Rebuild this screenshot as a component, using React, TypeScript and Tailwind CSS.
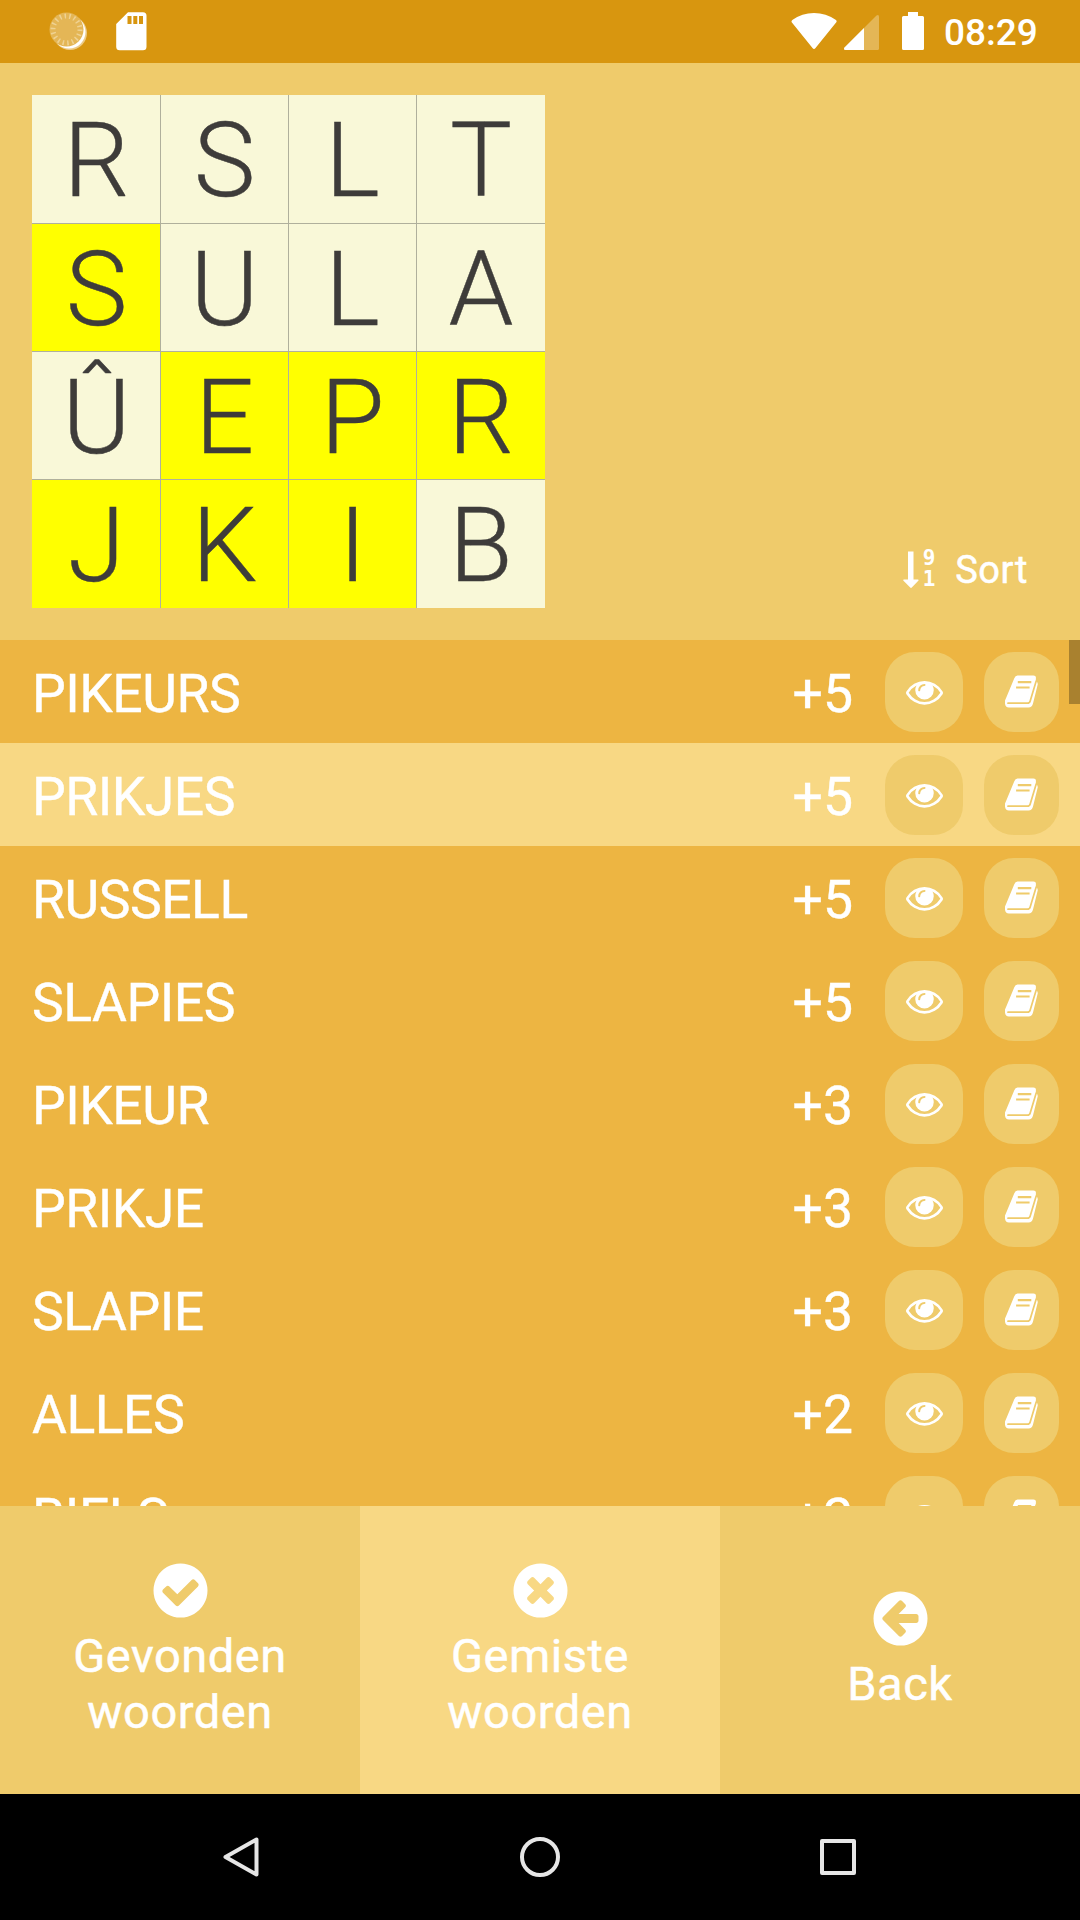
import React from 'react';

const CIRCLE =
  'q0 209-103 385.500t-279.500 279.500-385.500 103-385.500-103-279.500-279.500-103-385.500 103-385.500 279.500-279.500 385.500-103 385.500 103 279.500 279.500 103 385.500z';

const CHECK =
  'M1412 734q0-28-18-46l-91-90q-19-19-45-19t-45 19l-408 407-226-226q-19-19-45-19t-45 19l-91 90q-18 18-18 46 0 27 18 45l362 362q19 19 45 19 27 0 46-19l543-543q18-18 18-45zm252 162' + CIRCLE;
const TIMES =
  'M1277 1122q0-26-19-45l-181-181 181-181q19-19 19-45 0-27-19-46l-90-90q-19-19-46-19-26 0-45 19l-181 181-181-181q-19-19-45-19-27 0-46 19l-90 90q-19 19-19 46 0 26 19 45l181 181-181 181q-19 19-19 45 0 27 19 46l90 90q19 19 46 19 26 0 45-19l181-181 181 181q19 19 45 19 27 0 46-19l90-90q19-19 19-46zm387-226' + CIRCLE;
const ARROW_LEFT =
  'M1408 960v-128q0-26-19-45t-45-19h-502l189-189q19-19 19-45t-19-45l-91-91q-18-18-45-18t-45 18l-362 362-91 91q-18 18-18 45t18 45l91 91 362 362q18 18 45 18t45-18l91-91q18-18 18-45t-18-45l-189-189h502q26 0 45-19t19-45zm256-64' + CIRCLE;
const EYE =
  'M1664 960q-152-236-381-353 61 104 61 225 0 185-131.500 316.500t-316.500 131.500-316.500-131.500-131.500-316.500q0-121 61-225-229 117-381 353 133 205 333.500 326.500t434.500 121.500 434.500-121.500 333.500-326.500zm-720-384q0-20-14-34t-34-14q-125 0-214.500 89.500t-89.500 214.500q0 20 14 34t34 14 34-14 14-34q0-86 61-147t147-61q20 0 34-14t14-34zm848 384q0 34-20 69-140 230-376.500 368.500t-499.500 138.500-499.500-139-376.500-368q-20-35-20-69t20-69q140-229 376.500-368t499.500-139 499.500 139 376.500 368q20 35 20 69z';

function Icon({ d, className }: { d: string; className: string }) {
  return (
    <svg viewBox="0 0 1792 1792" fill="currentColor" className={className}>
      <path d={d} />
    </svg>
  );
}

function BookIcon() {
  return (
    <svg viewBox="0 0 33 33" width="33" height="33" fill="none">
      <path
        d="M12.500 .5H28.500Q31.300 .5 30.900 3.200L30.800 6Q33 7 32.700 9.500L28 28.500Q27 32.500 23.500 32.500H4Q.3 32.500 0 28.500V25.500L1.500 22L9.300 3.200Q10.300 .5 12.500 .5Z"
        fill="#fff"
      />
      <path d="M3 28.200H22.500Q24.600 28.200 25.200 26L31.200 6" stroke="#efcb6b" strokeWidth="1.700" strokeLinecap="round" />
      <path d="M12.800 7.200H26.300M11.100 12.500H24.600" stroke="#efcb6b" strokeWidth="2.200" />
    </svg>
  );
}

function StatusBar() {
  return (
    <div className="flex h-[63px] shrink-0 items-start justify-between bg-[#d8960f]">
      <svg width="160" height="63" viewBox="0 0 160 63">
        <circle cx="70" cy="33" r="17" fill="#fff" opacity="0.5" />
        <circle cx="69" cy="32" r="16.500" fill="#fff" />
        <circle cx="66.500" cy="29.500" r="17" fill="#e4b656" />
        <circle cx="66.500" cy="29.500" r="13.500" fill="none" stroke="#efd292" strokeWidth="5" strokeDasharray="1.500 3.212" />
        <path d="M128 12.300h15a3.500 3.500 0 0 1 3.500 3.500v31a3.500 3.500 0 0 1-3.500 3.500h-23.300a3.500 3.500 0 0 1-3.500-3.500V24z" fill="#fff" />
        <path d="M127.500 16h4v8h-4zM133.300 16h4v8h-4zM139 16h4v8h-4z" fill="#d8960f" />
      </svg>
      <div className="flex">
        <svg width="145" height="63" viewBox="785 0 145 63">
          <path d="M791.500 22Q791.300 21 792.300 20Q802 13 814 13T836 20Q837 21 836.500 22L815.500 48Q814 50 812.500 48Z" fill="#fff" />
          <path d="M876.500 15.500Q879 14 879 17V48.500Q879 50 877.500 50H845.500Q843 49.500 844.500 47.500Z" fill="#e4b656" />
          <path d="M864 28V50H845.500Q843 49.500 844.500 47.500Z" fill="#fff" />
          <path d="M908 12h10v4h4.500q1.500 0 1.500 1.500v31q0 1.500-1.500 1.500h-19q-1.500 0-1.500-1.500v-31q0-1.500 1.500-1.500h4.500z" fill="#fff" />
        </svg>
        <div className="w-[150px] pt-[11px] pl-[14px] text-[37px] leading-[44px] font-medium">08:29</div>
      </div>
    </div>
  );
}

const BOARD = ['R', 'S', 'L', 'T', 'S', 'U', 'L', 'A', 'Û', 'E', 'P', 'R', 'J', 'K', 'I', 'B'];
const MARKED = [4, 9, 10, 11, 12, 13, 14];

function Board() {
  return (
    <div className="grid h-[513px] w-[513px] grid-cols-[128px_128px_128px_129px] grid-rows-[128px_128px_128px_129px]">
      {BOARD.map((letter, i) => (
        <div
          key={i}
          className={`flex items-center justify-center border-[#b0b09c] pt-[4px] text-[104px] leading-none font-light text-[#3e3c3a] [-webkit-text-stroke:0.4px_#3e3c3a] ${
            MARKED.includes(i) ? 'bg-[#ffff00]' : 'bg-[#f9f8d8]'
          } ${i % 4 > 0 ? 'border-l' : 'pl-px'} ${i > 3 ? 'border-t' : ''}`}
        >
          {letter}
        </div>
      ))}
    </div>
  );
}

function SortButton() {
  return (
    <div className="mr-[52px] mb-[16px] flex items-center">
      <svg width="16" height="38" viewBox="0 0 16 38" fill="#fff">
        <path d="M5 0.500h5.500v28h4.500q1 .5.300 1.300l-6.500 6.700q-.8.800-1.600 0l-6.700-6.700q-.7-.9.300-1.300H5z" />
      </svg>
      <span className="mb-[2px] ml-[2px] flex w-4 flex-col items-center font-['DejaVu_Sans_Mono'] text-[21px] leading-[21px] font-bold">
        <span>9</span>
        <span>1</span>
      </span>
      <span className="ml-[18px] text-[38px] leading-[44px] tracking-[0.6px] [-webkit-text-stroke:0.5px_white]">Sort</span>
    </div>
  );
}

const WORDS: [string, string][] = [
  ['PIKEURS', '+5'],
  ['PRIKJES', '+5'],
  ['RUSSELL', '+5'],
  ['SLAPIES', '+5'],
  ['PIKEUR', '+3'],
  ['PRIKJE', '+3'],
  ['SLAPIE', '+3'],
  ['ALLES', '+2'],
  ['BIELS', '+2'],
];

function WordRow({ word, points, active }: { word: string; points: string; active: boolean }) {
  return (
    <div className={`flex h-[103px] shrink-0 items-center pr-[21px] pl-8 ${active ? 'bg-[#f8d884]' : ''}`}>
      <span className="flex-1 pt-1 text-[53.5px] leading-[64px] tracking-[-0.5px] [-webkit-text-stroke:0.4px_white]">{word}</span>
      <span className="mr-[32px] pt-1 text-[53.5px] leading-[64px] [-webkit-text-stroke:0.4px_white]">{points}</span>
      <span className="mr-[21px] flex h-20 w-[78px] items-center justify-center rounded-[30px] bg-[#efcb6b]">
        <Icon d={EYE} className="size-[37px]" />
      </span>
      <span className="flex h-20 w-[75px] items-center justify-center rounded-[30px] bg-[#efcb6b]">
        <BookIcon />
      </span>
    </div>
  );
}

function Tab({ icon, lines, active = false }: { icon: string; lines: string[]; active?: boolean }) {
  return (
    <div
      className={`flex flex-col items-center justify-center pb-[2px] text-[47px] leading-[56px] tracking-[0.55px] [-webkit-text-stroke:0.5px_white] ${
        active ? 'bg-[#f8d884]' : 'bg-[#efcb6b]'
      }`}
    >
      <Icon d={icon} className="mb-[6px] size-[63px]" />
      {lines.map((line) => (
        <span key={line}>{line}</span>
      ))}
    </div>
  );
}

function NavBar() {
  return (
    <div className="flex h-[126px] shrink-0 items-center justify-between bg-black px-[220px]">
      <svg width="44" height="44" viewBox="0 0 44 44" fill="none" stroke="#e6e6e6" strokeWidth="4" strokeLinejoin="round">
        <path d="M36.500 4.500V39.500L5.500 22z" />
      </svg>
      <svg width="44" height="44" viewBox="0 0 44 44" fill="none" stroke="#e6e6e6" strokeWidth="4">
        <circle cx="22" cy="22" r="18" />
      </svg>
      <svg width="44" height="44" viewBox="0 0 44 44" fill="none" stroke="#e6e6e6" strokeWidth="4" strokeLinejoin="round">
        <path d="M6 6h32v32H6z" />
      </svg>
    </div>
  );
}

export default function App() {
  return (
    <div className="flex h-[1920px] w-[1080px] flex-col overflow-hidden bg-[#efcb6b] font-['Roboto',sans-serif] text-white">
      <StatusBar />
      <div className="flex h-[577px] shrink-0 items-end justify-between pb-8 pl-8">
        <Board />
        <SortButton />
      </div>
      <div className="relative flex h-[866px] shrink-0 flex-col overflow-hidden bg-[#edb542]">
        {WORDS.map(([word, points], i) => (
          <WordRow key={word} word={word} points={points} active={i === 1} />
        ))}
        <div className="absolute top-0 right-0 h-16 w-[11px] bg-[#a9812f]" />
      </div>
      <div className="grid h-[288px] shrink-0 grid-cols-3">
        <Tab icon={CHECK} lines={['Gevonden', 'woorden']} />
        <Tab icon={TIMES} lines={['Gemiste', 'woorden']} active />
        <Tab icon={ARROW_LEFT} lines={['Back']} />
      </div>
      <NavBar />
    </div>
  );
}
